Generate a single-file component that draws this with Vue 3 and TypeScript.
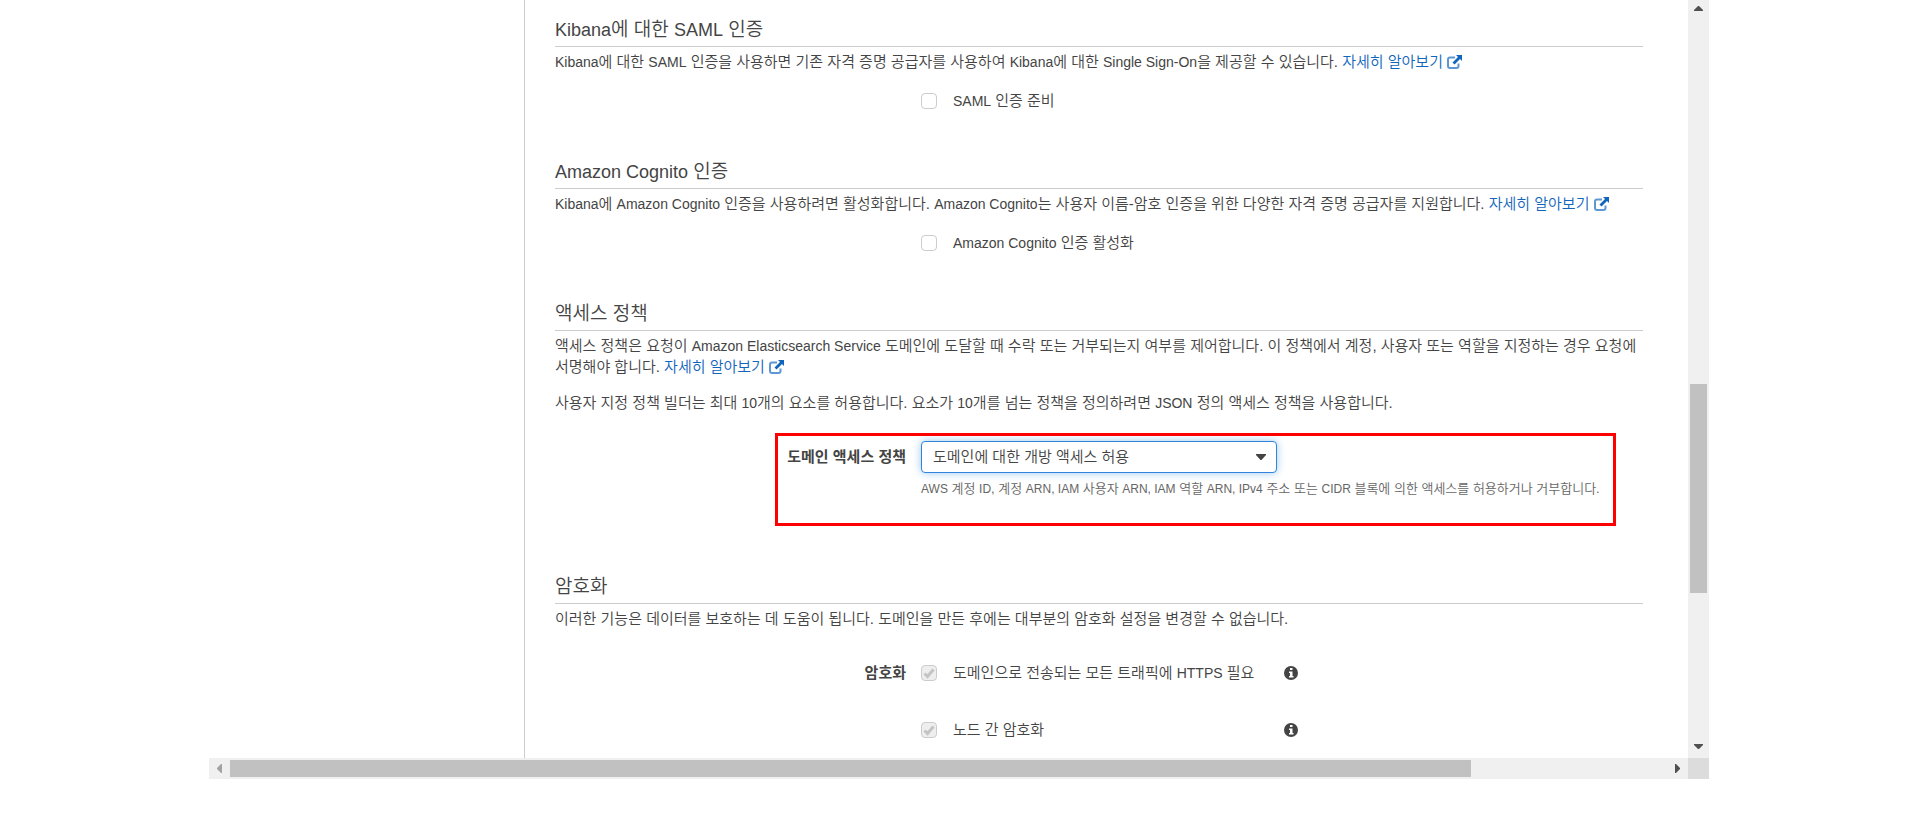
<script setup lang="ts">
import { ref } from 'vue'

const samlEnabled = ref(false)
const cognitoEnabled = ref(false)
const accessPolicy = ref('open')

const encryptionOptions = [
  { id: 'https', label: '암호화', before: '도메인으로 전송되는 모든 트래픽에 ', latin: 'HTTPS', after: ' 필요' },
  { id: 'node', label: '', before: '노드 간 암호화', latin: '', after: '' },
]
</script>

<template>
  <div class="frame">
    <div class="viewport">
      <aside class="side"></aside>
      <main class="content">
        <section class="section">
          <h2><span class="en">Kibana</span>에 대한 <span class="en">SAML</span> 인증</h2>
          <p>
            <span class="en">Kibana</span>에 대한 <span class="en">SAML</span> 인증을 사용하면 기존 자격 증명 공급자를 사용하여 <span class="en">Kibana</span>에 대한 <span class="en">Single Sign-On</span>을 제공할 수 있습니다.
            <a href="#saml">자세히 알아보기
              <svg class="ext" viewBox="0 0 15 14" aria-hidden="true"><path class="ext-box" d="M8 2.5H3Q1 2.5 1 4.5V11Q1 13 3 13H9.500Q11.500 13 11.500 11V8.500" /><path class="ext-arrow" d="M9 0H15V6L13 4L7.500 9.500L5.500 7.500L11 2Z" /></svg></a>
          </p>
          <div class="row first-row">
            <span class="row-label"></span>
            <label class="check" for="saml">
              <input id="saml" v-model="samlEnabled" type="checkbox" />
              <span><span class="en">SAML</span> 인증 준비</span>
            </label>
          </div>
        </section>

        <section class="section">
          <h2><span class="en">Amazon Cognito</span> 인증</h2>
          <p>
            <span class="en">Kibana</span>에 <span class="en">Amazon Cognito</span> 인증을 사용하려면 활성화합니다. <span class="en">Amazon Cognito</span>는 사용자 이름-암호 인증을 위한 다양한 자격 증명 공급자를 지원합니다.
            <a href="#cognito">자세히 알아보기
              <svg class="ext" viewBox="0 0 15 14" aria-hidden="true"><path class="ext-box" d="M8 2.5H3Q1 2.5 1 4.5V11Q1 13 3 13H9.500Q11.500 13 11.500 11V8.500" /><path class="ext-arrow" d="M9 0H15V6L13 4L7.500 9.500L5.500 7.500L11 2Z" /></svg></a>
          </p>
          <div class="row first-row">
            <span class="row-label"></span>
            <label class="check" for="cognito">
              <input id="cognito" v-model="cognitoEnabled" type="checkbox" />
              <span><span class="en">Amazon Cognito</span> 인증 활성화</span>
            </label>
          </div>
        </section>

        <section class="section">
          <h2>액세스 정책</h2>
          <p>
            액세스 정책은 요청이 <span class="en">Amazon Elasticsearch Service</span> 도메인에 도달할 때 수락 또는 거부되는지 여부를 제어합니다. 이 정책에서 계정, 사용자 또는 역할을 지정하는 경우 요청에 서명해야 합니다.
            <a href="#policy">자세히 알아보기
              <svg class="ext" viewBox="0 0 15 14" aria-hidden="true"><path class="ext-box" d="M8 2.5H3Q1 2.5 1 4.5V11Q1 13 3 13H9.500Q11.500 13 11.500 11V8.500" /><path class="ext-arrow" d="M9 0H15V6L13 4L7.500 9.500L5.500 7.500L11 2Z" /></svg></a>
          </p>
          <p class="note">
            사용자 지정 정책 빌더는 최대 <span class="en">10</span>개의 요소를 허용합니다. 요소가 <span class="en">10</span>개를 넘는 정책을 정의하려면 <span class="en">JSON</span> 정의 액세스 정책을 사용합니다.
          </p>
          <div class="row policy-row">
            <label class="row-label" for="access-policy">도메인 액세스 정책</label>
            <div>
              <div class="select-wrap">
                <select id="access-policy" v-model="accessPolicy">
                  <option value="open">도메인에 대한 개방 액세스 허용</option>
                </select>
                <svg class="caret" viewBox="0 0 10 6" aria-hidden="true"><path d="M0 0H10V1L5.500 6H4.500L0 1Z" /></svg>
              </div>
              <div class="help">
                <span class="en">AWS</span> 계정 <span class="en">ID</span>, 계정 <span class="en">ARN, IAM</span> 사용자 <span class="en">ARN, IAM</span> 역할 <span class="en">ARN, IPv4</span> 주소 또는 <span class="en">CIDR</span> 블록에 의한 액세스를 허용하거나 거부합니다.
              </div>
            </div>
            <div class="highlight"></div>
          </div>
        </section>

        <section class="section last">
          <h2>암호화</h2>
          <p>이러한 기능은 데이터를 보호하는 데 도움이 됩니다. 도메인을 만든 후에는 대부분의 암호화 설정을 변경할 수 없습니다.</p>
          <div class="options">
            <div v-for="o in encryptionOptions" :key="o.id" class="row">
              <span class="row-label">{{ o.label }}</span>
              <div class="option">
                <label class="check" :for="o.id">
                  <span class="locked">
                    <input :id="o.id" type="checkbox" checked disabled />
                    <svg viewBox="0 0 16 16" aria-hidden="true"><path d="M3.500 8.500L6.500 11.500L12.500 4.500" /></svg>
                  </span>
                  <span>{{ o.before }}<span v-if="o.latin" class="en">{{ o.latin }}</span>{{ o.after }}</span>
                </label>
                <button type="button" class="info" aria-label="정보">
                  <svg viewBox="0 0 14 14" aria-hidden="true">
                    <circle cx="7" cy="7" r="7" />
                    <path d="M6 2H8.500V4H6ZM5 5.500H8.500V10H9.500V11.500H5V10H6V7H5Z" />
                  </svg>
                </button>
              </div>
            </div>
          </div>
        </section>
      </main>
      <div class="vbar" aria-hidden="true">
        <svg class="up" viewBox="0 0 9 5"><path d="M4 0H5L9 4V5H0V4Z" /></svg>
        <div class="vtrack"><div class="thumb"></div></div>
        <svg class="down" viewBox="0 0 9 5"><path d="M0 0H9V1L5 5H4L0 1Z" /></svg>
      </div>
    </div>
    <div class="hbar" aria-hidden="true">
      <svg class="left" viewBox="0 0 5 9"><path d="M5 0V9H4L0 5V4L4 0Z" /></svg>
      <div class="htrack"><div class="thumb"></div></div>
      <svg class="right" viewBox="0 0 5 9"><path d="M0 0H1L5 4V5L1 9H0Z" /></svg>
      <div class="corner"></div>
    </div>
  </div>
</template>

<style>
body {
  margin: 0;
  background: #fff;
}
</style>

<style scoped>
* {
  box-sizing: border-box;
}
.frame {
  max-width: 1501px;
  margin: 0 auto;
  padding-right: 1px;
  color: #444;
  font: 350 15px/21px "Liberation Sans", "Noto Sans CJK KR", sans-serif;
}
.viewport {
  display: flex;
}
.side {
  flex: 0 0 315px;
}
.content {
  flex: 1;
  min-width: 0;
  padding: 18px 45px 17px 30px;
  border-left: 1px solid #ccc;
}
.section {
  margin-bottom: 48px;
}
.section.last {
  margin-bottom: 0;
}
.en {
  font-size: 14px;
  line-height: 1;
}
h2 {
  margin: 0 0 4px;
  padding-bottom: 4px;
  border-bottom: 1px solid #ccc;
  font-size: 19px;
  font-weight: 350;
  line-height: 24px;
}
h2 .en {
  font-size: 18px;
}
p {
  margin: 0;
}
.note {
  margin-top: 15px;
}
a {
  color: #16b;
  text-decoration: none;
}
.ext {
  width: 15px;
  height: 14px;
  vertical-align: -2px;
}
.ext-box {
  fill: none;
  stroke: #5d98d3;
  stroke-width: 2;
}
.ext-arrow {
  fill: #16b;
}
.row {
  position: relative;
  display: grid;
  grid-template-columns: minmax(0, 351fr) minmax(0, 722fr);
  column-gap: 15px;
  line-height: 22px;
}
.row-label {
  text-align: right;
  font-weight: 700;
}
.first-row {
  margin-top: 18px;
}
.check {
  display: flex;
  align-items: center;
  gap: 16px;
}
input {
  appearance: none;
  display: block;
  width: 16px;
  height: 16px;
  margin: 0;
  border: 1px solid #ccc;
  border-radius: 4px;
  background: #fff;
}
input:disabled {
  background: #eee;
}
.locked {
  display: grid;
}
.locked > * {
  grid-area: 1 / 1;
}
.locked svg {
  width: 16px;
  height: 16px;
  fill: none;
  stroke: #c4c4c4;
  stroke-width: 3;
}
.policy-row {
  margin-top: 28px;
  padding-bottom: 28px;
  line-height: 32px;
}
.select-wrap {
  display: grid;
  align-items: center;
  max-width: 356px;
}
.select-wrap > * {
  grid-area: 1 / 1;
}
select {
  appearance: none;
  width: 100%;
  height: 32px;
  padding: 0 30px 0 11px;
  border: 1px solid #3184dc;
  border-radius: 4px;
  outline: none;
  background: #fff;
  box-shadow: 0 0 8px #9cc8f2;
  color: #444;
  font: inherit;
  line-height: 28px;
}
.caret {
  justify-self: end;
  width: 10px;
  height: 6px;
  margin-right: 11px;
  fill: #444;
  pointer-events: none;
}
.help {
  margin-top: 6px;
  color: #666;
  font-size: 13px;
  line-height: 20px;
}
.help .en {
  font-size: 12px;
}
.highlight {
  position: absolute;
  top: -8px;
  right: 27px;
  bottom: 1px;
  left: 220px;
  border: 3px solid #f00;
  pointer-events: none;
}
.options {
  display: grid;
  gap: 35px;
  margin-top: 33px;
}
.option {
  display: flex;
  align-items: center;
  gap: 16px;
}
.option .check {
  flex: 0 0 347px;
}
.info {
  display: block;
  padding: 0;
  border: 0;
  background: none;
}
.info svg {
  display: block;
  width: 14px;
  height: 14px;
  fill: #444;
}
.info path {
  fill: #fff;
}
.vbar {
  display: flex;
  flex: 0 0 21px;
  flex-direction: column;
  align-items: center;
  background: #f0f0f0;
}
.vbar svg {
  width: 9px;
  height: 5px;
  fill: #505050;
}
.up {
  margin: 6px 0;
}
.down {
  margin: 7px 0 9px;
}
.vtrack {
  display: grid;
  flex: 1;
  width: 17px;
  grid-template-rows: 367fr 209fr 144fr;
}
.vtrack .thumb {
  grid-row: 2;
}
.thumb {
  background: #c1c1c1;
}
.hbar {
  display: flex;
  align-items: center;
  height: 21px;
  background: #f0f0f0;
}
.hbar svg {
  width: 5px;
  height: 9px;
  margin: 0 8px;
  fill: #505050;
}
.hbar .left {
  fill: #a3a3a3;
}
.htrack {
  display: grid;
  flex: 1;
  height: 17px;
  grid-template-columns: 1241fr 196fr;
}
.corner {
  flex: 0 0 21px;
  height: 21px;
  background: #dcdcdc;
}
</style>
